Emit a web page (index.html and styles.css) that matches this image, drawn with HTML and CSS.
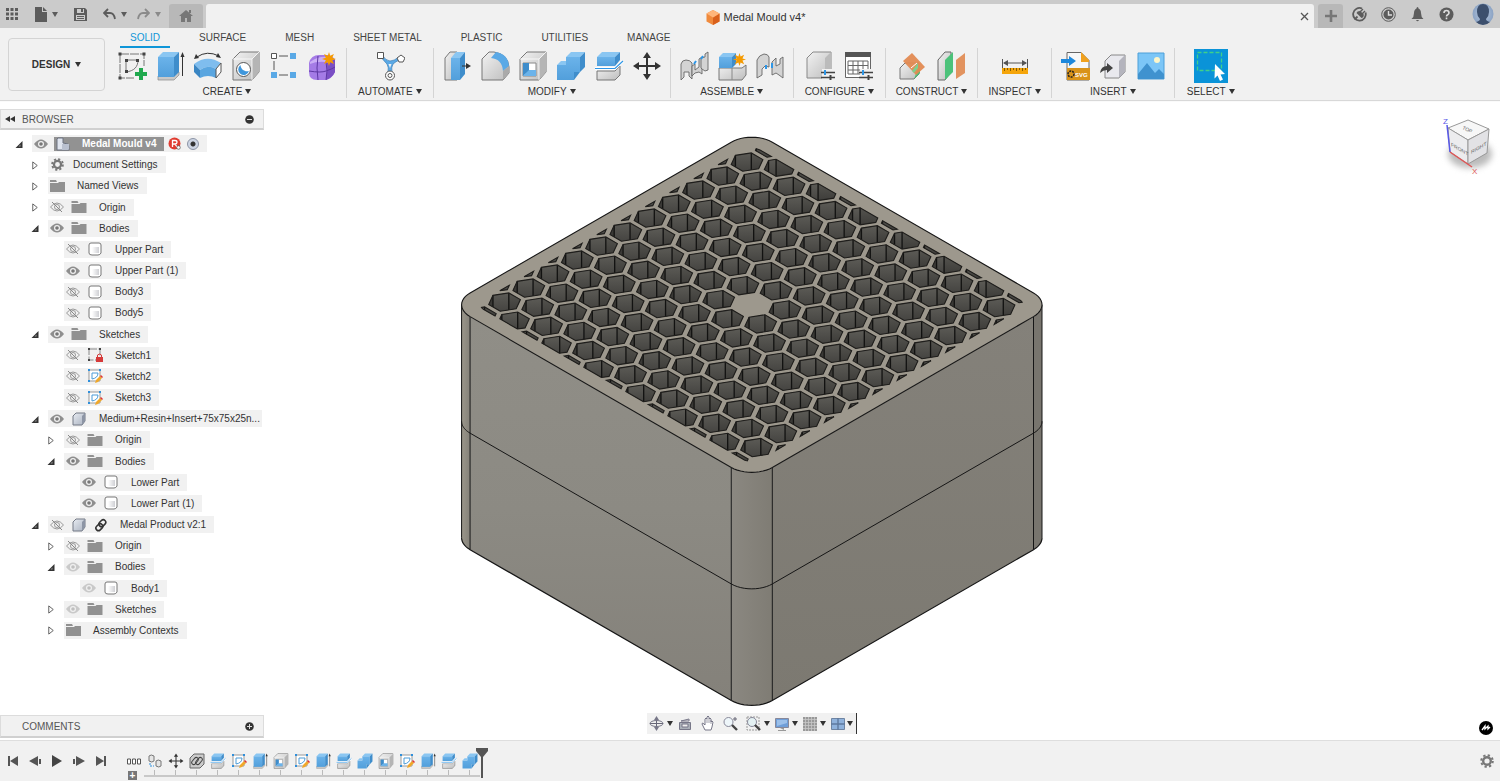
FILE: index.html
```html
<!DOCTYPE html>
<html lang="en">
<head>
<meta charset="utf-8">
<title>Medal Mould v4</title>
<link rel="stylesheet" href="styles.css">
</head>
<body>
<svg class="sprite" aria-hidden="true">
  <defs>
    <linearGradient id="gGrey" x1="0" y1="0" x2="1" y2="1"><stop offset="0" stop-color="#f2f2f2"/><stop offset="1" stop-color="#bdbdbd"/></linearGradient>
    <linearGradient id="gBlue" x1="0" y1="0" x2="0" y2="1"><stop offset="0" stop-color="#6bb3ea"/><stop offset="1" stop-color="#529fdb"/></linearGradient>
    <linearGradient id="gBody" x1="0" y1="0" x2="1" y2="0"><stop offset="0" stop-color="#fff"/><stop offset="1" stop-color="#cfd0d4"/></linearGradient>
    <linearGradient id="gComp" x1="0" y1="0" x2="1" y2="1"><stop offset="0" stop-color="#e8ecf2"/><stop offset="1" stop-color="#aab2c0"/></linearGradient>
    <radialGradient id="gAvatar"><stop offset="0" stop-color="#b9c9df"/><stop offset="1" stop-color="#8ba3c4"/></radialGradient>
  </defs>

  <symbol id="caret" viewBox="0 0 6 5"><path d="M0 0h6L3 5z" fill="currentColor"/></symbol>
  <symbol id="star" viewBox="0 0 14 14"><path d="M7 0l1.200 3.800L12 2l-1.800 3.800L14 7l-3.800 1.200L12 12 8.200 10.200 7 14l-1.200-3.800L2 12l1.800-3.800L0 7l3.800-1.200L2 2l3.800 1.800z" fill="#f59a00"/></symbol>

  <symbol id="sketch" viewBox="0 0 30 30">
    <path d="M3 3h24v12M3 3v24h14" fill="none" stroke="#777" stroke-dasharray="9 1"/>
    <path d="M9 9h12c0 7-4 11-12 12z" fill="none" stroke="#777"/>
    <path d="M1.500 1.500h3v3h-3zM25.500 1.500h3v3h-3zM1.500 25.500h3v3h-3zM8 8h3v3H8zM19 8h3v3h-3zM8 19h3v3H8z" fill="#444"/>
    <path d="M22 17h4v4h4v4h-4v4h-4v-4h-4v-4h4z" fill="#1fa84d"/>
  </symbol>
  <symbol id="extrude" viewBox="0 0 30 30">
    <path d="M3 25v4h16l5-5v-3z" fill="#c9c9c9" stroke="#888" stroke-width=".7"/>
    <path d="M3 6h16v20H3z" fill="url(#gBlue)"/><path d="M3 6l5-5h16l-5 5z" fill="#8ac6f2"/><path d="M19 6l5-5v20l-5 5z" fill="#3f8dcb"/>
    <path d="M27.500 25V4" stroke="#333"/><path d="M25.500 6l2-5 2 5z" fill="#333"/>
  </symbol>
  <symbol id="revolve" viewBox="0 0 30 30">
    <path d="M4 6Q14-1 26 5" fill="none" stroke="#333"/><path d="M1 8l2-5 3 4zM28 7l-5-1 2-4z" fill="#333"/>
    <path d="M1 13Q14 3 28 12l-5 6Q15 13 7 19z" fill="#7fbdee"/><path d="M7 19q8-6 16-1v9q-8-4-16 0z" fill="#5aa6e0"/><path d="M1 13l6 6v8l-6-6z" fill="#3a86c3"/><path d="M23 18l5-6v9l-5 6z" fill="#fff" stroke="#555"/>
  </symbol>
  <symbol id="cube" viewBox="0 0 30 30">
    <path d="M2 8l7-7h19v20l-7 8H2z" fill="url(#gGrey)" stroke="#777" stroke-linejoin="round"/><path d="M21 8l7-7v20l-7 8z" fill="#b5b5b5"/><path d="M2 8h19v21M21 8l7-7" fill="none" stroke="#fff" stroke-width=".8"/>
  </symbol>
  <symbol id="hole" viewBox="0 0 30 30"><use href="#cube"/><circle cx="12.500" cy="18.500" r="7" fill="#fff" stroke="#555"/><path d="M9.500 14a5.500 5.500 0 1 0 8.500 6c-4 1-8-1-8.500-6z" fill="#3f97dc"/></symbol>
  <symbol id="pattern" viewBox="0 0 30 30">
    <path d="M10 5h9M5 10v9M10 24h9" fill="none" stroke="#555"/>
    <path d="M2.500 2.500h5v5h-5z" fill="#fff" stroke="#555"/><path d="M21 2h6v6h-6zM2 21h6v6H2zM21 21h6v6h-6z" fill="#5aa9e6"/>
  </symbol>
  <symbol id="form" viewBox="0 0 30 30">
    <path d="M2 12q2-8 10-8h9q7 1 7 8v9q-3 7-10 8h-8q-8 0-8-8z" fill="#a47be6"/><path d="M20 12q5-2 8-4v13q-3 6-9 8 2-9 1-17z" fill="#7a4fc4"/><path d="M3 11q8-6 18-5l-2 5Q10 10 3 13z" fill="#caaef5"/>
    <path d="M11 5q-2 12 0 24M2 20q12 2 17 0 6-2 9-4M19 11q2 8 0 18" fill="none" stroke="#5d37a3"/>
    <use href="#star" x="15" y="1" width="14" height="14"/>
  </symbol>
  <symbol id="automate" viewBox="0 0 30 30">
    <path d="M5 5q5 6 7 8 2 3 1 9h4q-1-6 1-9 2-2 8-5l-2-2q-5 4-9 4t-8-6z" fill="#5aa9e6" stroke="#3a7db5" stroke-width=".7"/><path d="M13.500 13h3l-1.500 4z" fill="#f1f1f1"/>
    <path d="M2.500 1.500h6v6h-6zM26 4l4 3-2 4h-4l-2-4z" fill="#fff" stroke="#555"/><circle cx="15" cy="24.500" r="4.500" fill="#fff" stroke="#555"/><circle cx="15" cy="24.500" r="2" fill="none" stroke="#555"/>
  </symbol>
  <symbol id="presspull" viewBox="0 0 30 30">
    <path d="M3 7l5-6h7v28H3z" fill="url(#gGrey)" stroke="#777"/><path d="M9 7h9v22H9z" fill="url(#gBlue)"/><path d="M9 7l5-6h9l-5 6z" fill="#8ac6f2"/><path d="M18 7l5-6v22l-5 6z" fill="#3f8dcb"/>
    <path d="M20 15h6" stroke="#333"/><path d="M24 12l5 3-5 3z" fill="#333"/>
  </symbol>
  <symbol id="fillet" viewBox="0 0 30 30">
    <path d="M2 8l7-7h5q14 2 15 15v6l-6 7H2z" fill="url(#gGrey)" stroke="#777" stroke-linejoin="round"/><path d="M11 7l5-6q12 2 13 14l-6 5Q22 8 11 7z" fill="#5aa9e6"/><path d="M23 20l6-5v7l-6 7z" fill="#aaa"/>
  </symbol>
  <symbol id="shell" viewBox="0 0 30 30"><use href="#cube"/><path d="M5 12h13v13H5z" fill="#fff" stroke="#888"/><path d="M5 12h6v8l-6 5z" fill="#3f8dcb"/><path d="M5 25l6-6h7v6z" fill="#6bb3ea"/></symbol>
  <symbol id="combine" viewBox="0 0 30 30">
    <path d="M1 14h9V6h14v15h-6v8H1z" fill="url(#gBlue)"/><path d="M1 14l4-4h5v4zM10 6l5-5h14l-5 5z" fill="#8ac6f2"/><path d="M24 6l5-5v15l-5 5zM18 21h6l-6 8z" fill="#3f8dcb"/>
  </symbol>
  <symbol id="split" viewBox="0 0 30 30">
    <path d="M3 20h18l5-5v9l-5 5H3z" fill="url(#gGrey)" stroke="#777"/><path d="M3 6h18v9H3z" fill="url(#gBlue)"/><path d="M3 6l5-5h18l-5 5z" fill="#8ac6f2"/><path d="M21 6l5-5v8l-5 6z" fill="#3f8dcb"/><path d="M1 17.500h20l8-7.500" fill="none" stroke="#fff" stroke-width="3"/><path d="M1 17.500h20l8-7.500" fill="none" stroke="#2e96e6" stroke-width="1.200"/>
  </symbol>
  <symbol id="move" viewBox="0 0 30 30"><path d="M15 4v22M4 15h22" stroke="#333" stroke-width="2"/><path d="M15 1l4 6h-8zM15 29l-4-6h8zM1 15l6-4v8zM29 15l-6 4v-8z" fill="#333"/></symbol>
  <symbol id="joint" viewBox="0 0 30 30">
    <g fill="#d3d3d3" stroke="#666" stroke-width=".9" stroke-linejoin="round"><path d="M2 29V13q1-4 5-4t6 3v16l-3-3v-4H5v5z"/><path d="M13 25V15l3-2v6l4-3V8l3-2v17l-3-2-4 1z"/><path d="M22 17V7l4-1V3l3-2v18l-3 1-3-2z"/></g><path d="M15 13l2-3M22 8l2-3" stroke="#2e96e6" stroke-width="2"/>
  </symbol>
  <symbol id="newcomp" viewBox="0 0 30 30">
    <path d="M2 17h23l4-3v10l-4 5H2z" fill="url(#gGrey)" stroke="#777"/><path d="M2 6h13v11H2z" fill="url(#gBlue)"/><path d="M2 6l4-4h13l-4 4z" fill="#8ac6f2"/><path d="M15 6l4-4v11l-4 4z" fill="#3f8dcb"/><path d="M15 17v12" stroke="#888"/><use href="#star" x="16" y="2" width="13" height="13"/>
  </symbol>
  <symbol id="asbuilt" viewBox="0 0 30 30">
    <g fill="#d3d3d3" stroke="#666" stroke-width=".9" stroke-linejoin="round"><path d="M2 27V9q2-5 7-6 4 0 5 3v10l-4-1-3 3v6z"/><path d="M17 24V11l4-4v8l4-2v-5l3-2v21l-4-3-3-2z"/></g><path d="M11 14v4M17 12v5" stroke="#2e96e6" stroke-width="2"/>
  </symbol>
  <symbol id="sliders" viewBox="0 0 14 12"><path d="M0 3.500h14M0 8.500h14" stroke="#444" stroke-width="1.300"/><path d="M4 1v5" stroke="#2e96e6" stroke-width="2"/><path d="M9.500 6v5" stroke="#444" stroke-width="2"/></symbol>
  <symbol id="config" viewBox="0 0 30 30"><path d="M2 7l6-6h18v20l-6 6H2z" fill="url(#gGrey)" stroke="#888"/><path d="M20 7l6-6v20l-6 6z" fill="#bbb"/><path d="M17 18h13v11H17z" fill="#f1f1f1"/><use href="#sliders" x="16" y="18" width="14" height="12"/></symbol>
  <symbol id="conftable" viewBox="0 0 30 30"><path d="M2.500 2.500h25v24h-25z" fill="#fff" stroke="#666"/><path d="M2 1h26v5H2z" fill="#555"/><path d="M5 10h20v13H5zM5 14.500h20M5 19h20M10 10v13M15 10v13M20 10v13" fill="none" stroke="#666"/><path d="M17 18h13v11H17z" fill="#f1f1f1"/><use href="#sliders" x="16" y="18" width="14" height="12"/></symbol>
  <symbol id="plane" viewBox="0 0 30 30"><path d="M2 17l5-5h14v11l-5 5H2z" fill="url(#gGrey)" stroke="#777"/><path d="M16 28l6-6V12z" fill="#4cc27a"/><path d="M14 2l13 14-9 8L5 10z" fill="#e28a52" opacity=".95"/><path d="M13 17l6-5" stroke="#fff"/><path d="M14 20l6-8v5l-4 5z" fill="#7ccf8f"/></symbol>
  <symbol id="offplane" viewBox="0 0 30 30"><path d="M2 9l7-8h6v20l-6 8H2z" fill="url(#gGrey)" stroke="#666"/><path d="M9 9l8-8v20l-8 8z" fill="#4cc27a"/><path d="M20 9l9-7v20l-9 6z" fill="#e2935f"/></symbol>
  <symbol id="measure" viewBox="0 0 30 30"><path d="M2.500 8v9M27.500 8v9M4 12h22" stroke="#555"/><path d="M3 12l5-3v6zM27 12l-5-3v6z" fill="#555"/><path d="M2 17h26v6H2z" fill="#f5a50a"/><path d="M4.500 17v3m3-3v2m3-2v3m3-3v2m3-2v3m3-3v2m3-2v3m3-3v2" stroke="#6b4a00" stroke-width=".8"/></symbol>
  <symbol id="insvg" viewBox="0 0 30 30"><path d="M7 1.500h14l8 8V29H7z" fill="#f7f7f7" stroke="#666"/><path d="M21 1l8 8v2h-8z" fill="#f0a11e"/><path d="M7 17h23v12H7z" fill="#d9931a"/><path d="M1 8h8V5l7 5-7 5v-3H1z" fill="#1e88dc"/><circle cx="11" cy="23" r="3" fill="none" stroke="#222" stroke-width="1.500" stroke-dasharray="2 1"/><text x="15" y="26" class="tiny-text">SVG</text></symbol>
  <symbol id="derive" viewBox="0 0 30 30"><path d="M7 10l6-6h14v17l-6 6H7z" fill="#e9e9ee" stroke="#888"/><path d="M21 10l6-6v17l-6 6z" fill="#b4b4bd"/><path d="M2 22q1-7 7-7v-3l6 5-6 5v-3q-4 0-7 3z" fill="#444"/></symbol>
  <symbol id="image" viewBox="0 0 30 30"><path d="M2 2h26v26H2z" fill="#7cc6f7" stroke="#4d9fd8"/><circle cx="21" cy="9" r="3" fill="#fdf6c9"/><path d="M2 23l9-11 8 10 4-4 5 5v5H2z" fill="#3f92cf"/></symbol>
  <symbol id="select" viewBox="0 0 34 34"><path d="M3.500 3.500h24v18h-24z" fill="none" stroke="#3fd08a" stroke-width="1.300" stroke-dasharray="4 2"/><path d="M21 15l10 10-4.500.5 2.500 5-3 1.500-2.500-5.500-3 3z" fill="#fff"/></symbol>

  <symbol id="eye" viewBox="0 0 14 10"><path d="M0 5q7-9 14 0-7 9-14 0z" fill="#8e8e8e"/><circle cx="7" cy="5" r="3" fill="#f1f1f1"/><circle cx="7" cy="5" r="1.800" fill="#777"/></symbol>
  <symbol id="eyeoff" viewBox="0 0 14 10"><path d="M.5 5q6.500-8 13 0-6.500 8-13 0z" fill="none" stroke="#999"/><circle cx="7" cy="5" r="2.500" fill="none" stroke="#999"/><path d="M2 0l10 10" stroke="#888"/></symbol>
  <symbol id="folder" viewBox="0 0 15 12"><path d="M0 0h6l1 2H0zM0 3h8l1-1h6v10H0z" fill="#919191"/></symbol>
  <symbol id="body" viewBox="0 0 14 14"><path d="M1 3q0-2 2-2h8q2 0 2 2v8q-1 2-3 2H4q-3 0-3-2z" fill="#fff" stroke="#777"/><path d="M4 5h7v6H4z" fill="url(#gBody)"/></symbol>
  <symbol id="comp" viewBox="0 0 14 14"><path d="M1 4l3-3h9v8l-3 4H1z" fill="url(#gComp)" stroke="#737985" stroke-linejoin="round"/><path d="M10 4l3-3v8l-3 4z" fill="#8d95a5"/></symbol>
  <symbol id="comps" viewBox="0 0 14 14"><path d="M1 2l1-1h5v5l5 1 1 2v4H1z" fill="#dfe4ee" stroke="#6c7280"/><path d="M6 7h7v5l-1 1H6z" fill="#b9c0cf"/></symbol>
  <symbol id="gear" viewBox="0 0 14 14"><circle cx="7" cy="7" r="3.800" fill="none" stroke="#777" stroke-width="2.400"/><circle cx="7" cy="7" r="5.800" fill="none" stroke="#777" stroke-width="2" stroke-dasharray="2.300 2.255"/></symbol>
  <symbol id="sk" viewBox="0 0 16 16"><path d="M2 2h11v11H2z" fill="#fff" stroke="#999"/><path d="M5 5h6q0 5-6 6z" fill="none" stroke="#4a9bd8"/><path d="M1 1h2v2H1zM12 1h2v2h-2zM1 12h2v2H1z" fill="#2e8fdb"/><path d="M8 15l1-3 4-4 2 2-4 4z" fill="#f0a82a"/><path d="M13 8l1-1 2 2-1 1z" fill="#d33"/></symbol>
  <symbol id="sklock" viewBox="0 0 16 16"><path d="M2 2h11v11H2z" fill="none" stroke="#888" stroke-dasharray="8 1.500"/><path d="M1 1h2v2H1zM12 1h2v2h-2zM1 12h2v2H1z" fill="#444"/><path d="M9 10h7v5H9z" fill="#d63a3a"/><path d="M10.500 10V8q2-2 4 0v2" fill="none" stroke="#d63a3a"/></symbol>
  <symbol id="link" viewBox="0 0 14 14"><g fill="none" stroke="#333" stroke-width="1.600"><rect x="6" y="1.500" width="5" height="7.500" rx="2.500" transform="rotate(45 8.500 5)"/><rect x="3" y="5.500" width="5" height="7.500" rx="2.500" transform="rotate(45 5.500 9)"/></g></symbol>
  <symbol id="open" viewBox="0 0 8 8"><path d="M7.500.5v7h-7z" fill="#333"/><path d="M5.500 4v2h-2z" fill="#999"/></symbol>
  <symbol id="shut" viewBox="0 0 8 10"><path d="M1.500 1v8l5-4z" fill="#fff" stroke="#555"/></symbol>
</svg>

<div class="app">
  <header class="topbar">
    <div class="quick">
      <button aria-label="Data panel"><svg width="14" height="14" viewBox="0 0 14 14"><path d="M1 1h3v3H1zM5.500 1h3v3h-3zM10 1h3v3h-3zM1 5.500h3v3H1zM5.500 5.500h3v3h-3zM10 5.500h3v3h-3zM1 10h3v3H1zM5.500 10h3v3h-3zM10 10h3v3h-3z" fill="currentColor"/></svg></button>
      <button class="file" aria-label="File"><svg width="12" height="15" viewBox="0 0 12 15"><path d="M0 0h7v5h5v10H0zM8 0l4 4H8z" fill="currentColor"/></svg><svg width="6" height="5"><use href="#caret"/></svg></button>
      <button aria-label="Save"><svg width="13" height="13" viewBox="0 0 13 13"><path d="M0 0h11l2 2v11H0zM3 1v4h7V1zM2 7v5h9V7z" fill="currentColor" fill-rule="evenodd"/><path d="M7 1h2v3H7zM3 8h7v1H3zM3 10h7v1H3z" fill="currentColor"/></svg></button>
      <button class="file" aria-label="Undo"><svg width="13" height="12" viewBox="0 0 13 12"><path d="M5 1L1 5l4 4M1 5h6q4 0 5 6" fill="none" stroke="currentColor" stroke-width="1.800"/></svg><svg width="6" height="5"><use href="#caret"/></svg></button>
      <button class="file faded" aria-label="Redo"><svg width="13" height="12" viewBox="0 0 13 12"><path d="M8 1l4 4-4 4M12 5H6q-4 0-5 6" fill="none" stroke="currentColor" stroke-width="1.800"/></svg><svg width="6" height="5"><use href="#caret"/></svg></button>
    </div>
    <button class="tab-side home" aria-label="Home"><svg width="14" height="12" viewBox="0 0 14 12"><path d="M7 0l7 6h-2v6H8V8H6v4H2V6H0zM10 0h2v3h-2z" fill="#777"/></svg></button>
    <div class="doc-tab">
      <div class="doc-title"><svg width="14" height="15" viewBox="0 0 14 15"><path d="M7 0l6.500 3.500v8L7 15 .5 11.500v-8z" fill="#f08a3c"/><path d="M7 7.500l6.500-4v8L7 15z" fill="#d9601c"/><path d="M7 0l6.500 3.500L7 7.500.5 3.500z" fill="#ffb57a"/></svg>Medal Mould v4*</div>
      <button class="close" aria-label="Close tab"><svg width="9" height="9" viewBox="0 0 9 9"><path d="M1 1l7 7M8 1L1 8" stroke="#555" stroke-width="1.300"/></svg></button>
    </div>
    <button class="tab-side plus" aria-label="New tab"><svg width="12" height="12" viewBox="0 0 12 12"><path d="M6 0v12M0 6h12" stroke="#777" stroke-width="2.600"/></svg></button>
    <div class="account">
      <button aria-label="Extensions"><svg width="15" height="15" viewBox="0 0 15 15"><path d="M10 1.500a6.300 6.300 0 1 0 3.500 4" fill="none" stroke="currentColor" stroke-width="1.800"/><path d="M2.500 12.500l3-3" stroke="currentColor" stroke-width="1.800"/><path d="M4.500 6l5 5q3-1 2-4L8 4q-3 0-3.500 2z" fill="currentColor"/><path d="M8 5l3-3M10 7l3-3" stroke="currentColor" stroke-width="1.400"/></svg></button>
      <button aria-label="Job status"><svg width="15" height="15" viewBox="0 0 15 15"><circle cx="7.500" cy="7.500" r="6.800" fill="none" stroke="currentColor"/><circle cx="7.500" cy="7.500" r="5" fill="currentColor"/><path d="M7.500 4v4H11" fill="none" stroke="#ddd" stroke-width="1.400"/></svg></button>
      <button class="bell" aria-label="Notifications"><svg width="13" height="15" viewBox="0 0 13 15"><path d="M6.500 0q1 0 1 1.500Q10 2.500 10 6q0 4 2.500 6H.5Q3 10 3 6q0-3.500 2.500-4.500 0-1.500 1-1.500zM5 13h3q-1.500 2.500-3 0z" fill="currentColor"/></svg></button>
      <button aria-label="Help"><svg width="15" height="15" viewBox="0 0 15 15"><circle cx="7.500" cy="7.500" r="7" fill="currentColor"/><path d="M5 6q0-2.500 2.500-2.500T10 6q0 1-1.300 1.700T7.500 9.500M7.500 10.500v1.700" fill="none" stroke="#ddd" stroke-width="1.600"/></svg></button>
      <button class="avatar" aria-label="Account"><svg width="22" height="22" viewBox="0 0 22 22"><circle cx="11" cy="11" r="10.500" fill="url(#gAvatar)"/><path d="M5 9q0-8 6-8t6 8q0 4-3 7 0 2 4 3-3 3-7 3t-7-3q4-1 4-3-3-3-3-7z" fill="#3c4f6d"/></svg></button>
    </div>
  </header>

  <section class="ribbon">
    <button class="workspace">DESIGN <svg class="car"><use href="#caret"/></svg></button>
    <div class="ribbon-body">
      <nav class="tabs">
        <a href="#solid" class="active">SOLID</a><a href="#surface">SURFACE</a><a href="#mesh">MESH</a><a href="#sheet">SHEET METAL</a><a href="#plastic">PLASTIC</a><a href="#utilities">UTILITIES</a><a href="#manage">MANAGE</a>
      </nav>
      <div class="groups">
        <div class="group"><div class="tools"><button aria-label="Create sketch"><svg><use href="#sketch"/></svg></button><button aria-label="Extrude"><svg><use href="#extrude"/></svg></button><button aria-label="Revolve"><svg><use href="#revolve"/></svg></button><button aria-label="Hole"><svg><use href="#hole"/></svg></button><button aria-label="Pattern"><svg><use href="#pattern"/></svg></button><button aria-label="Create form"><svg><use href="#form"/></svg></button></div><button class="menu">CREATE <svg class="car"><use href="#caret"/></svg></button></div>
        <div class="group roomy"><div class="tools"><button aria-label="Automated modeling"><svg><use href="#automate"/></svg></button></div><button class="menu">AUTOMATE <svg class="car"><use href="#caret"/></svg></button></div>
        <div class="group"><div class="tools"><button aria-label="Press pull"><svg><use href="#presspull"/></svg></button><button aria-label="Fillet"><svg><use href="#fillet"/></svg></button><button aria-label="Shell"><svg><use href="#shell"/></svg></button><button aria-label="Combine"><svg><use href="#combine"/></svg></button><button aria-label="Split body"><svg><use href="#split"/></svg></button><button aria-label="Move"><svg><use href="#move"/></svg></button></div><button class="menu">MODIFY <svg class="car"><use href="#caret"/></svg></button></div>
        <div class="group"><div class="tools"><button aria-label="Joint"><svg><use href="#joint"/></svg></button><button aria-label="New component"><svg><use href="#newcomp"/></svg></button><button aria-label="As-built joint"><svg><use href="#asbuilt"/></svg></button></div><button class="menu">ASSEMBLE <svg class="car"><use href="#caret"/></svg></button></div>
        <div class="group roomy"><div class="tools"><button aria-label="Configure"><svg><use href="#config"/></svg></button><button aria-label="Configuration table"><svg><use href="#conftable"/></svg></button></div><button class="menu">CONFIGURE <svg class="car"><use href="#caret"/></svg></button></div>
        <div class="group wide"><div class="tools"><button aria-label="Plane at angle"><svg><use href="#plane"/></svg></button><button aria-label="Offset plane"><svg><use href="#offplane"/></svg></button></div><button class="menu">CONSTRUCT <svg class="car"><use href="#caret"/></svg></button></div>
        <div class="group wide"><div class="tools"><button aria-label="Measure"><svg><use href="#measure"/></svg></button></div><button class="menu">INSPECT <svg class="car"><use href="#caret"/></svg></button></div>
        <div class="group"><div class="tools"><button aria-label="Insert SVG"><svg><use href="#insvg"/></svg></button><button aria-label="Insert derive"><svg><use href="#derive"/></svg></button><button aria-label="Canvas"><svg><use href="#image"/></svg></button></div><button class="menu">INSERT <svg class="car"><use href="#caret"/></svg></button></div>
        <div class="group wide"><div class="tools"><button class="selected" aria-label="Select"><svg><use href="#select"/></svg></button></div><button class="menu">SELECT <svg class="car"><use href="#caret"/></svg></button></div>
      </div>
    </div>
  </section>

  <main class="viewport">
    <aside class="side">
      <div class="panel-head"><button aria-label="Collapse"><svg width="10" height="6" viewBox="0 0 10 6"><path d="M5 0v6L0 3zM10 0v6L5 3z" fill="#333"/></svg></button><span>BROWSER</span><button aria-label="Hide browser"><svg width="9" height="9" viewBox="0 0 9 9"><circle cx="4.500" cy="4.500" r="4.300" fill="#333"/><path d="M2 4.500h5" stroke="#ddd"/></svg></button></div>
      <ul class="tree">
        <li class="l0"><button class="tw" aria-label="Toggle"><svg><use href="#open"/></svg></button><div class="chip"><button class="eye" aria-label="Visibility"><svg><use href="#eye"/></svg></button><div class="root"><svg class="ic"><use href="#comps"/></svg><span>Medal Mould v4</span></div><svg class="badge" viewBox="0 0 13 13"><circle cx="6.500" cy="6.500" r="6" fill="#e03c31"/><path d="M4.500 10V3.500h2.500q2 0 2 1.700T7 7H4.500M7 7l2 3" fill="none" stroke="#fff" stroke-width="1.300"/><circle cx="10.500" cy="10.500" r="1.800" fill="#fff" stroke="#555" stroke-width=".7"/></svg><input type="radio" name="active" aria-label="Activate component" checked></div></li>
        <li class="l1"><button class="tw" aria-label="Toggle"><svg><use href="#shut"/></svg></button><div class="chip"><span class="eye"><svg class="gr"><use href="#gear"/></svg></span><span>Document Settings</span></div></li>
        <li class="l1"><button class="tw" aria-label="Toggle"><svg><use href="#shut"/></svg></button><div class="chip"><span class="eye"><svg class="fo"><use href="#folder"/></svg></span><span class="far">Named Views</span></div></li>
        <li class="l1"><button class="tw" aria-label="Toggle"><svg><use href="#shut"/></svg></button><div class="chip"><button class="eye" aria-label="Visibility"><svg><use href="#eyeoff"/></svg></button><svg class="ic fo"><use href="#folder"/></svg><span>Origin</span></div></li>
        <li class="l1"><button class="tw" aria-label="Toggle"><svg><use href="#open"/></svg></button><div class="chip"><button class="eye" aria-label="Visibility"><svg><use href="#eye"/></svg></button><svg class="ic fo"><use href="#folder"/></svg><span>Bodies</span></div></li>
        <li class="l2"><div class="chip"><button class="eye" aria-label="Visibility"><svg><use href="#eyeoff"/></svg></button><svg class="ic"><use href="#body"/></svg><span>Upper Part</span></div></li>
        <li class="l2"><div class="chip"><button class="eye" aria-label="Visibility"><svg><use href="#eye"/></svg></button><svg class="ic"><use href="#body"/></svg><span>Upper Part (1)</span></div></li>
        <li class="l2"><div class="chip"><button class="eye" aria-label="Visibility"><svg><use href="#eyeoff"/></svg></button><svg class="ic"><use href="#body"/></svg><span>Body3</span></div></li>
        <li class="l2"><div class="chip"><button class="eye" aria-label="Visibility"><svg><use href="#eyeoff"/></svg></button><svg class="ic"><use href="#body"/></svg><span>Body5</span></div></li>
        <li class="l1"><button class="tw" aria-label="Toggle"><svg><use href="#open"/></svg></button><div class="chip"><button class="eye" aria-label="Visibility"><svg><use href="#eye"/></svg></button><svg class="ic fo"><use href="#folder"/></svg><span>Sketches</span></div></li>
        <li class="l2"><div class="chip"><button class="eye" aria-label="Visibility"><svg><use href="#eyeoff"/></svg></button><svg class="ic sk"><use href="#sklock"/></svg><span>Sketch1</span></div></li>
        <li class="l2"><div class="chip"><button class="eye" aria-label="Visibility"><svg><use href="#eyeoff"/></svg></button><svg class="ic sk"><use href="#sk"/></svg><span>Sketch2</span></div></li>
        <li class="l2"><div class="chip"><button class="eye" aria-label="Visibility"><svg><use href="#eyeoff"/></svg></button><svg class="ic sk"><use href="#sk"/></svg><span>Sketch3</span></div></li>
        <li class="l1"><button class="tw" aria-label="Toggle"><svg><use href="#open"/></svg></button><div class="chip tight"><button class="eye" aria-label="Visibility"><svg><use href="#eye"/></svg></button><svg class="ic"><use href="#comp"/></svg><span>Medium+Resin+Insert+75x75x25n...</span></div></li>
        <li class="l2"><button class="tw" aria-label="Toggle"><svg><use href="#shut"/></svg></button><div class="chip"><button class="eye" aria-label="Visibility"><svg><use href="#eyeoff"/></svg></button><svg class="ic fo"><use href="#folder"/></svg><span>Origin</span></div></li>
        <li class="l2"><button class="tw" aria-label="Toggle"><svg><use href="#open"/></svg></button><div class="chip"><button class="eye" aria-label="Visibility"><svg><use href="#eye"/></svg></button><svg class="ic fo"><use href="#folder"/></svg><span>Bodies</span></div></li>
        <li class="l3"><div class="chip"><button class="eye" aria-label="Visibility"><svg><use href="#eye"/></svg></button><svg class="ic"><use href="#body"/></svg><span>Lower Part</span></div></li>
        <li class="l3"><div class="chip"><button class="eye" aria-label="Visibility"><svg><use href="#eye"/></svg></button><svg class="ic"><use href="#body"/></svg><span>Lower Part (1)</span></div></li>
        <li class="l1"><button class="tw" aria-label="Toggle"><svg><use href="#open"/></svg></button><div class="chip"><button class="eye" aria-label="Visibility"><svg><use href="#eyeoff"/></svg></button><svg class="ic"><use href="#comp"/></svg><svg class="ic lk"><use href="#link"/></svg><span>Medal Product v2:1</span></div></li>
        <li class="l2"><button class="tw" aria-label="Toggle"><svg><use href="#shut"/></svg></button><div class="chip"><button class="eye" aria-label="Visibility"><svg><use href="#eyeoff"/></svg></button><svg class="ic fo"><use href="#folder"/></svg><span>Origin</span></div></li>
        <li class="l2"><button class="tw" aria-label="Toggle"><svg><use href="#open"/></svg></button><div class="chip"><button class="eye dim" aria-label="Visibility"><svg><use href="#eye"/></svg></button><svg class="ic fo"><use href="#folder"/></svg><span>Bodies</span></div></li>
        <li class="l3"><div class="chip"><button class="eye dim" aria-label="Visibility"><svg><use href="#eye"/></svg></button><svg class="ic"><use href="#body"/></svg><span>Body1</span></div></li>
        <li class="l2"><button class="tw" aria-label="Toggle"><svg><use href="#shut"/></svg></button><div class="chip"><button class="eye dim" aria-label="Visibility"><svg><use href="#eye"/></svg></button><svg class="ic fo"><use href="#folder"/></svg><span>Sketches</span></div></li>
        <li class="l2"><button class="tw" aria-label="Toggle"><svg><use href="#shut"/></svg></button><div class="chip"><span class="eye"><svg class="fo"><use href="#folder"/></svg></span><span class="far">Assembly Contexts</span></div></li>
      </ul>
      <div class="panel-head comments"><span>COMMENTS</span><button aria-label="Show comments"><svg width="9" height="9" viewBox="0 0 9 9"><circle cx="4.500" cy="4.500" r="4.300" fill="#333"/><path d="M2 4.500h5M4.500 2v5" stroke="#ddd"/></svg></button></div>
    </aside>

    <div class="stage">
      <svg id="model" class="model" viewBox="0 0 584 572" role="img" aria-label="Medal mould model">
        <defs>
          <linearGradient id="fLeft" x1="0" y1="0" x2="0" y2="1"><stop offset="0" stop-color="#908e87"/><stop offset=".5" stop-color="#8c8a83"/><stop offset="1" stop-color="#84817a"/></linearGradient>
          <linearGradient id="fRight" x1="0" y1="0" x2="0" y2="1"><stop offset="0" stop-color="#84817a"/><stop offset="1" stop-color="#7c7971"/></linearGradient>
          <linearGradient id="fFront" x1="0" y1="0" x2="1" y2="0"><stop offset="0" stop-color="#8b8881"/><stop offset="1" stop-color="#7f7c74"/></linearGradient>
          <linearGradient id="fEdge" x1="0" y1="0" x2="1" y2="0"><stop offset="0" stop-color="#9a968a"/><stop offset="1" stop-color="#85827a"/></linearGradient>
          <linearGradient id="wMid" x1="0" y1="0" x2="0" y2="1"><stop offset="0" stop-color="#5c5b56"/><stop offset="1" stop-color="#454441"/></linearGradient>
          <linearGradient id="wRight" x1="0" y1="0" x2="0" y2="1"><stop offset="0" stop-color="#54534e"/><stop offset="1" stop-color="#3e3d3a"/></linearGradient>
        </defs>
      </svg>
      <div class="navbar">
        <button aria-label="Orbit"><svg width="15" height="15" viewBox="0 0 15 15"><path d="M7.500 1v13M1 7.500h13" stroke="#667" stroke-width="1"/><path d="M7.500 0L10 4H5zM7.500 15L5 11h5z" fill="#778"/><ellipse cx="7.500" cy="7.500" rx="6.500" ry="3" fill="none" stroke="#778"/></svg></button><svg class="car"><use href="#caret"/></svg>
        <button aria-label="Look at"><svg width="14" height="14" viewBox="0 0 14 14"><path d="M1.500 5.500h11v7h-11z" fill="#aab0b8" stroke="#778"/><path d="M3 4l8-2v2zM4 7h6v3H4z" fill="#eee" stroke="#778"/></svg></button>
        <button aria-label="Pan"><svg width="14" height="15" viewBox="0 0 14 15"><path d="M4 14L1 8q0-2 2 0l1 1V3q1-2 2 0V1q1-2 2 0v2q1-2 2 0v3q1-2 2 0l-1 5-1 3z" fill="#fff" stroke="#778"/><path d="M6 3v4M8 3v4M10 4v4" stroke="#778" stroke-width=".7"/></svg></button>
        <button aria-label="Zoom"><svg width="15" height="15" viewBox="0 0 15 15"><circle cx="5.500" cy="6" r="4.500" fill="#eef6fa" stroke="#889"/><path d="M9 9l5 5" stroke="#444" stroke-width="2.400"/><path d="M12 1v4M10 3h4" stroke="#667"/></svg></button>
        <button aria-label="Fit"><svg width="15" height="15" viewBox="0 0 15 15"><path d="M1 1h12v13H1z" fill="none" stroke="#999" stroke-dasharray="2 1"/><circle cx="6" cy="6" r="4.500" fill="#e4f1f3" stroke="#889"/><path d="M9 9l5 5" stroke="#444" stroke-width="2.400"/></svg></button><svg class="car"><use href="#caret"/></svg>
        <button aria-label="Display settings"><svg width="14" height="14" viewBox="0 0 14 14"><path d="M.5 1.500h13v9H.5z" fill="#6f9ed8" stroke="#889"/><path d="M2 3h10v3L2 9z" fill="#9cc0ea"/><path d="M5 11h4v2H3v1h8v-1H9" fill="#999"/></svg></button><svg class="car"><use href="#caret"/></svg>
        <button aria-label="Grid"><svg width="14" height="14" viewBox="0 0 14 14"><path d="M0 0h14v14H0z" fill="#999"/><path d="M0 2.500h14M0 5.500h14M0 8.500h14M0 11.500h14M2.500 0v14M5.500 0v14M8.500 0v14M11.500 0v14" stroke="#c8c8c8" stroke-width=".8"/></svg></button><svg class="car"><use href="#caret"/></svg>
        <button aria-label="Viewports"><svg width="14" height="12" viewBox="0 0 14 12"><path d="M.5.500h13v11H.5z" fill="#8fb2dc" stroke="#6f85a3"/><path d="M7 0v12M0 6h14" stroke="#5f7a9e" stroke-width="1.400"/></svg></button><svg class="car"><use href="#caret"/></svg>
      </div>
    </div>

    <div class="right">
      <svg class="viewcube" width="60" height="66" viewBox="0 0 60 66" role="img" aria-label="View cube">
        <ellipse cx="30" cy="42" rx="22" ry="14" fill="#bbb" class="shade"/>
        <path d="M8 16L28 8l21 9-21 11z" fill="#f7f7f7" stroke="#999"/><path d="M8 16l20 12v24L10 40z" fill="#ececee" stroke="#999"/><path d="M49 17L28 28v24l19-11z" fill="#e2e2e5" stroke="#999"/>
        <path d="M7 13l3 27" stroke="#5757e8" stroke-width="1.500"/><path d="M10 40l22 15" stroke="#e05555" stroke-width="1.500"/>
        <text x="3" y="12" class="ax z">Z</text><text x="32" y="62" class="ax x">X</text>
        <text x="0" y="0" class="cl" transform="translate(11 34) skewY(30)">FRONT</text><text x="0" y="0" class="cl" transform="translate(31 42) skewY(-30)">RIGHT</text><text x="0" y="0" class="cl" transform="translate(22 17) rotate(24)">TOP</text>
      </svg>
      <button class="assist" aria-label="Assistant"><svg width="14" height="14" viewBox="0 0 14 14"><circle cx="7" cy="7" r="7" fill="#000"/><path d="M3 9l3-4v3l3-3v3l2-2" fill="none" stroke="#fff" stroke-width="1.300"/></svg></button>
    </div>
  </main>

  <footer class="timeline">
    <div class="play">
      <button aria-label="To start"><svg width="12" height="12" viewBox="0 0 12 12"><path d="M1 1h2v10H1zM11 1v10L3 6z" fill="#555"/></svg></button>
      <button aria-label="Step back"><svg width="12" height="12" viewBox="0 0 12 12"><path d="M9 1v10L0 6zM10 4h2v5h-2z" fill="#555"/></svg></button>
      <button aria-label="Play"><svg width="12" height="12" viewBox="0 0 12 12"><path d="M1 0v12l10-6z" fill="#444"/></svg></button>
      <button aria-label="Step forward"><svg width="12" height="12" viewBox="0 0 12 12"><path d="M3 1v10l9-5zM0 4h2v5H0z" fill="#555"/></svg></button>
      <button aria-label="To end"><svg width="12" height="12" viewBox="0 0 12 12"><path d="M9 1h2v10H9zM1 1v10l8-5z" fill="#555"/></svg></button>
    </div>
    <div class="history">
      <button class="first" aria-label="Group"><svg viewBox="0 0 16 16"><path d="M1.500 6h3v5h-3zM6.500 6h3v5h-3zM11.500 6h3v5h-3z" fill="#fff" stroke="#555"/></svg></button>
      <button aria-label="Insert"><svg viewBox="0 0 16 16"><path d="M2 3q2-2 5 0v5q-2 2-5 0zM9 8q2-2 5 0v5q-2 2-5 0z" fill="#e5e5e5" stroke="#777"/><path d="M3 10v3h4" fill="none" stroke="#2e8fdb" stroke-dasharray="2 1"/></svg></button>
      <button aria-label="Move"><svg><use href="#move"/></svg></button>
      <button aria-label="Rigid group"><svg viewBox="0 0 16 16"><path d="M1 5l4-4h10v10l-4 4H1z" fill="#ccc" stroke="#666"/><g fill="none" stroke="#444"><rect x="4" y="4" width="4" height="8" rx="2" transform="rotate(40 6 8)"/><rect x="8" y="4" width="4" height="8" rx="2" transform="rotate(40 10 8)"/></g></svg></button>
      <button aria-label="Split"><svg><use href="#split"/></svg></button><button aria-label="Sketch"><svg><use href="#sk"/></svg></button><button aria-label="Extrude"><svg><use href="#extrude"/></svg></button><button aria-label="Shell"><svg><use href="#shell"/></svg></button><button aria-label="Sketch"><svg><use href="#sk"/></svg></button><button aria-label="Extrude"><svg><use href="#extrude"/></svg></button><button aria-label="Split"><svg><use href="#split"/></svg></button><button aria-label="Combine"><svg><use href="#combine"/></svg></button><button aria-label="Shell"><svg><use href="#shell"/></svg></button><button aria-label="Sketch"><svg><use href="#sk"/></svg></button><button aria-label="Extrude"><svg><use href="#extrude"/></svg></button><button aria-label="Split"><svg><use href="#split"/></svg></button><button class="last" aria-label="Combine"><svg><use href="#combine"/></svg></button>
    </div>
    <svg class="marker" width="12" height="30" viewBox="0 0 12 30"><path d="M0 0h12v3L7 9v21H5V9L0 3z" fill="#555"/></svg>
    <button class="prefs" aria-label="Timeline settings"><svg width="14" height="14"><use href="#gear"/></svg></button>
  </footer>
</div>
<script src="model.js"></script>
</body>
</html>
```

FILE: styles.css
```css
* { box-sizing: border-box; }
body {
  margin: 0;
  font-family: "Liberation Sans", Arial, sans-serif;
  font-size: 10px;
  color: #333;
  background: #fff;
}
button {
  display: flex;
  align-items: center;
  justify-content: center;
  margin: 0;
  padding: 0;
  border: 0;
  background: none;
  font: inherit;
  color: inherit;
}
svg { display: block; flex: none; }
.sprite { position: absolute; width: 0; height: 0; }
.app { display: flex; flex-direction: column; min-height: 100vh; }

/* Title bar */
.topbar { display: flex; align-items: flex-end; height: 28px; background: #cbcbcb; color: #5c5c5c; }
.quick { display: flex; align-items: center; align-self: stretch; width: 169px; padding-left: 5px; gap: 16px; }
.file { gap: 5px; }
.quick .faded { margin-left: -6px; color: #8a8a8a; }
.tab-side { height: 24px; background: #b8b8b8; border-radius: 3px 3px 0 0; }
.home { width: 34px; }
.plus { width: 25px; }
.doc-tab { flex: 1; display: flex; align-items: center; height: 24px; margin: 0 4px 0 3px; padding: 0 5px; background: #f1f1f1; border-radius: 3px 3px 0 0; }
.doc-title { flex: 1; display: flex; align-items: center; justify-content: center; gap: 4px; padding-top: 2px; font-size: 11px; color: #333; }
.account { display: flex; align-items: center; align-self: stretch; gap: 14px; padding: 0 6px 0 9px; }
.bell { width: 15px; }
.avatar { margin-left: 4px; }

/* Ribbon */
.ribbon { display: flex; height: 73px; background: #f1f1f1; border-bottom: 1px solid #d8d8d8; }
.workspace { width: 97px; height: 53px; margin: 10px 3px 0 8px; gap: 5px; border: 1px solid #d4d4d4; border-radius: 4px; font-weight: 700; }
.ribbon-body { flex: 1; display: flex; flex-direction: column; }
.tabs { display: flex; gap: 19px; height: 20px; padding-left: 12px; }
.tabs a { padding: 4px 10px 0; line-height: 12px; color: #444; text-decoration: none; }
.tabs .active { color: #0f96d8; border-bottom: 2px solid #0f96d8; }
.groups { display: flex; }
.group { display: flex; flex-direction: column; align-items: center; height: 50px; padding: 0 8px; border-right: 1px solid #d4d4d4; }
.group:first-child { padding: 0 9px; }
.group.wide { padding: 0 10px; }
.group.roomy { padding: 0 11px; }
.group:last-child { padding: 0 12px; border: 0; }
.tools { display: flex; align-items: center; gap: 8px; height: 36px; }
.tools svg { width: 30px; height: 30px; }
.tools .selected { background: #0a93d8; }
.tools .selected svg { width: 34px; height: 34px; }
.menu { gap: 3px; height: 14px; white-space: nowrap; }
.car { width: 6px; height: 5px; color: #333; }
.tiny-text { font: 700 6px "Liberation Sans", Arial, sans-serif; fill: #fff; }

/* Viewport */
.viewport { flex: 1; display: grid; grid-template-columns: 264px 1fr 260px; padding-top: 7px; border-top: 1px solid #fafafa; }
.side { display: flex; flex-direction: column; }
.panel-head { display: flex; align-items: center; height: 21px; padding: 0 9px 0 4px; gap: 7px; background: #f1f1f1; border: 1px solid #dcdcdc; border-bottom: 2px solid #d0d0d0; color: #555; }
.panel-head span { flex: 1; }
.panel-head.comments { height: 23px; margin-top: auto; margin-bottom: 2px; padding-left: 21px; }
.tree { display: grid; align-content: space-between; min-height: 505px; margin: 5px 0 0; padding: 0; list-style: none; }
.tree li { display: flex; height: 18px; }
.l0 { padding-left: 32px; }
.l1 { padding-left: 48px; }
.l2 { padding-left: 64px; }
.l3 { padding-left: 80px; }
.tw { width: 16px; height: 18px; margin-left: -21px; margin-right: 5px; }
.tw svg { width: 8px; height: 9px; }
.chip { display: flex; align-items: center; height: 17px; padding-right: 8px; background: #f1f1f1; white-space: nowrap; }
.chip.tight { padding-right: 2px; }
.chip > span:last-child { padding-left: 7px; }
.chip > span.far { padding-left: 11px; }
.eye { display: flex; align-items: center; justify-content: center; width: 18px; height: 17px; }
.eye svg { width: 14px; height: 10px; }
.eye .gr { width: 13px; height: 13px; }
.dim { opacity: .4; }
.ic { width: 14px; height: 14px; margin: 0 6px; }
.eye .fo { width: 15px; height: 12px; }
.ic.fo { width: 16px; height: 12px; margin: 0 5px; }
.ic.sk { width: 16px; height: 16px; margin: 0 5px; }
.ic.lk { margin: 0 5px 0 2px; }
.root { display: flex; align-items: center; height: 14px; margin-left: 4px; padding-right: 8px; background: #929292; color: #fff; font-weight: 700; }
.root .ic { margin: 0 12px 0 2px; }
.badge { width: 13px; height: 13px; margin: 0 6px 0 4px; }
.chip input { appearance: none; width: 12px; height: 12px; margin: 0; border: 1px solid #8a93a5; border-radius: 50%; background: radial-gradient(circle, #333 0 2px, #cdd5e4 3px 6px); }

.stage { display: flex; flex-direction: column; align-items: center; padding-top: 27px; }
.model { width: 100%; max-width: 584px; }
.navbar { display: flex; align-items: center; height: 21px; margin-top: 5px; padding: 0 3px 0 2px; background: #f1f1f1; border-right: 1px solid #333; }
.navbar button { width: 15px; }
.navbar button + button { margin-left: 8px; }
.navbar .car { margin: 0 4px 0 3px; }
.navbar .car:last-child { margin: 0 0 0 2px; }
.right { display: flex; flex-direction: column; align-items: flex-end; justify-content: space-between; padding-bottom: 5px; }
.right .viewcube { margin-top: 3px; }
.shade { filter: blur(3px); }
.ax { font: 8px "Liberation Sans", Arial, sans-serif; }
.z { fill: #5757e8; }
.x { fill: #e05555; }
.cl { font: 5px "Liberation Sans", Arial, sans-serif; fill: #666; }
.assist { margin-right: 7px; }

/* Timeline */
.timeline { display: flex; align-items: flex-start; height: 41px; background: #f1f1f1; border-top: 1px solid #dedede; }
.play { display: flex; gap: 10px; padding: 14px 16px 0 7px; }
.history { display: flex; padding-top: 12px; }
.history button { position: relative; width: 21px; height: 24px; align-items: flex-start; border-bottom: 2px solid #c8c8c8; }
.history svg { width: 16px; height: 16px; }
.history button::after { content: ""; position: absolute; left: 10px; bottom: 0; width: 1px; height: 5px; background: #bbb; }
.history .first { border-bottom-color: transparent; }
.history .first::after { content: "+"; bottom: -5px; left: 5px; width: 9px; height: 9px; background: #777; color: #fff; font: 700 10px/9px "Liberation Sans", Arial, sans-serif; }
.marker { margin: 7px 0 0 -4px; }
.prefs { margin: 13px 6px 0 auto; }
```

FILE: model.js
```js
// Draws the isometric mould: a rounded block with a honeycomb pocket on top.
(function () {
  var svg = document.getElementById('model');
  var CX = 0.866, SX = 0.5, OX = 291.8, OY = 168.8;
  var HALF = 174.5, RAD = 23.7, SEAM = 116.5, BASE = 233;
  var PITCH = 28, HEX = 13.4, INNER = 159.5, INNER_RAD = 10;

  function project(p) { return [OX + CX * (p[0] + p[1]), OY + SX * (p[0] - p[1])]; }
  function arc(cx, cy, r, from, to) {
    var pts = [];
    for (var k = 0; k <= 12; k++) {
      var t = (from + (to - from) * k / 12) * Math.PI / 180;
      pts.push([cx + r * Math.cos(t), cy + r * Math.sin(t)]);
    }
    return pts;
  }
  function rounded(h, r) {
    var c = h - r;
    return arc(c, c, r, 0, 90).concat(arc(-c, c, r, 90, 180), arc(-c, -c, r, 180, 270), arc(c, -c, r, 270, 360));
  }
  function d(pts, open) {
    return 'M' + pts.map(function (p) { return p[0].toFixed(2) + ' ' + p[1].toFixed(2); }).join('L') + (open ? '' : 'Z');
  }
  function add(path, fill, stroke, width) {
    var el = document.createElementNS('http://www.w3.org/2000/svg', 'path');
    el.setAttribute('d', path);
    el.setAttribute('fill', fill || 'none');
    if (stroke) { el.setAttribute('stroke', stroke); el.setAttribute('stroke-width', width || 1); }
    svg.appendChild(el);
  }
  function drop(pts, h) { return pts.map(function (p) { return [p[0], p[1] + h]; }); }
  // Keeps the part of a polygon where side(p) >= 0.
  function cut(poly, side) {
    var out = [];
    poly.forEach(function (a, i) {
      var b = poly[(i + 1) % poly.length], sa = side(a), sb = side(b);
      if (sa >= 0) out.push(a);
      if ((sa >= 0) !== (sb >= 0)) {
        var t = sa / (sa - sb);
        out.push([a[0] + t * (b[0] - a[0]), a[1] + t * (b[1] - a[1])]);
      }
    });
    return out;
  }
  function area(poly) {
    return Math.abs(poly.reduce(function (s, a, i) {
      var b = poly[(i + 1) % poly.length];
      return s + a[0] * b[1] - a[1] * b[0];
    }, 0) / 2);
  }

  var c = HALF - RAD;
  var left = arc(-c, -c, RAD, 225, 270).map(project);
  var front = arc(c, -c, RAD, 270, 360).map(project);
  var right = arc(c, c, RAD, 0, 45).map(project);
  function wall(chain, fill) { add(d(chain.concat(drop(chain, BASE).reverse())), fill); }
  wall([left[12], front[0]], 'url(#fLeft)');
  wall([front[12], right[0]], 'url(#fRight)');
  wall(left, 'url(#fEdge)');
  wall(front, 'url(#fFront)');
  wall(right, '#78756e');

  var chain = left.concat(front, right);
  add(d(drop(chain, SEAM), true), null, '#161616');
  add(d(drop(chain, BASE), true), null, '#161616', 1.2);
  [left[0], left[12], front[0], front[12], right[0], right[12]].forEach(function (p) {
    add(d([p, [p[0], p[1] + BASE]], true), null, '#161616');
  });
  add(d(rounded(HALF, RAD).map(project)), '#9d988d', '#161616', 1.1);

  var clip = rounded(INNER, INNER_RAD);
  function cell(x, y) {
    var poly = [];
    for (var k = 0; k < 6; k++) {
      poly.push([x + HEX * Math.cos(k * Math.PI / 3), y + HEX * Math.sin(k * Math.PI / 3)]);
    }
    clip.forEach(function (a, i) {
      var b = clip[(i + 1) % clip.length];
      if (Math.hypot(b[0] - a[0], b[1] - a[1]) < 0.01) return;
      poly = cut(poly, function (p) { return (b[0] - a[0]) * (p[1] - a[1]) - (b[1] - a[1]) * (p[0] - a[0]); });
    });
    if (poly.length < 3 || area(poly) < 10) return;
    // Mirrored by the projection, so walk the rim the other way round.
    var s = poly.map(project).reverse();
    add(d(s), '#454440');
    s.forEach(function (a, i) {
      var b = s[(i + 1) % s.length];
      // Rear walls hang from rim edges that run left to right.
      if (b[0] <= a[0] + 0.2) return;
      var slope = (b[1] - a[1]) / (b[0] - a[0]);
      var strip = cut(cut(s, function (p) { return p[0] - a[0]; }), function (p) { return b[0] - p[0]; });
      if (strip.length < 3) return;
      add(d(strip), slope < -1 ? '#3a3936' : slope > 0.1 ? 'url(#wRight)' : 'url(#wMid)');
    });
    s.forEach(function (b, i) {
      var a = s[(i + s.length - 1) % s.length], n = s[(i + 1) % s.length];
      if (b[0] <= a[0] + 0.2 || n[0] <= b[0] + 0.2) return;
      var turn = Math.atan2(n[1] - b[1], n[0] - b[0]) - Math.atan2(b[1] - a[1], b[0] - a[0]);
      if (Math.abs(turn) < 0.3) return;
      var low = b[1];
      s.forEach(function (p, k) {
        var q = s[(k + 1) % s.length];
        if ((p[0] - b[0]) * (q[0] - b[0]) < 0) low = Math.max(low, p[1] + (b[0] - p[0]) / (q[0] - p[0]) * (q[1] - p[1]));
      });
      add(d([b, [b[0], low]], true), null, '#121211', 1.3);
    });
    add(d(s), null, '#1f1e1c', 1.1);
  }
  for (var i = -7; i <= 7; i++) {
    for (var j = -7; j <= 7; j++) {
      if (i === 0 && j === 0) continue;
      cell(i * PITCH * 0.866, (j + (i % 2 ? 0.5 : 0)) * PITCH);
    }
  }
})();
```
